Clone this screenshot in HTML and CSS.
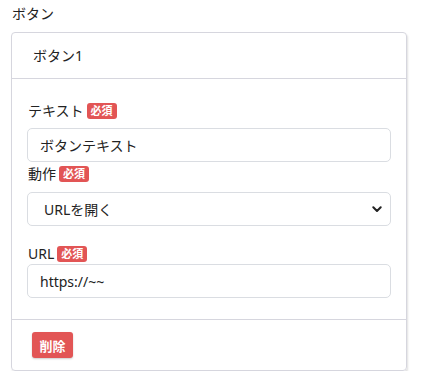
FILE: index.html
```html
<!DOCTYPE html>
<html lang="ja">
  <head>
    <meta charset="UTF-8" />
    <meta name="viewport" content="width=device-width, initial-scale=1.0" />
    <title>ボタン</title>
    <link rel="stylesheet" href="styles.css">
  </head>
  <body>
    <div class="page">
      <h3 class="section-title">ボタン</h3>
      <div class="card">
        <div class="card-header">ボタン1</div>
        <div class="card-body">
          <label class="field-label first">テキスト <span class="badge">必須</span></label>
          <input class="field" type="text" value="ボタンテキスト" />

          <label class="field-label">動作 <span class="badge">必須</span></label>
          <div class="select-wrap">
            <select class="field select">
              <option>URLを開く</option>
            </select>
            <svg class="chevron" width="10" height="7" viewBox="0 0 10 7">
              <path d="M1.3 1.3 L5 5 L8.7 1.3" fill="none" stroke="#222" stroke-width="2" stroke-linecap="round" stroke-linejoin="round" />
            </svg>
          </div>

          <label class="field-label url">URL <span class="badge">必須</span></label>
          <input class="field" type="text" value="https://~~" />
        </div>
        <div class="card-footer">
          <button class="btn-delete" type="button">削除</button>
        </div>
      </div>
    </div>
  </body>
</html>
```

FILE: styles.css
```css
body {
  margin: 0;
  font-family: "Noto Sans", "Noto Sans CJK JP", sans-serif;
  color: #222;
  background: #fff;
}

.page {
  padding: 4px 19px 0 11px;
}

.section-title {
  margin: 0 0 8px 1px;
  font-size: 14px;
  font-weight: normal;
  line-height: 20px;
}

.card {
  border: 1px solid #d6d6de;
  border-radius: 4px;
  box-shadow: 1px 2px 2px rgba(0, 0, 0, 0.12);
}

.card-header {
  height: 45px;
  line-height: 45px;
  padding-left: 21px;
  font-size: 14px;
  border-bottom: 1px solid #d6d6de;
}

.card-body {
  padding: 24px 15px 21px 15px;
  display: flex;
  flex-direction: column;
}

.field-label {
  display: flex;
  align-items: center;
  gap: 3px;
  font-size: 14px;
  line-height: 16px;
  margin: 0 0 9px 1px;
}

.field-label.url {
  margin: 20px 0 2px 1px;
}

.field-label + .select-wrap {
  margin-top: 1px;
}

.badge {
  display: inline-block;
  background: #e25555;
  color: #fff;
  font-size: 11px;
  font-weight: bold;
  line-height: 16px;
  padding: 0 4px;
  border-radius: 3px;
}

.field {
  box-sizing: border-box;
  width: 100%;
  height: 34px;
  padding: 0 12px;
  border: 1px solid #dadde2;
  border-radius: 5px;
  font-family: inherit;
  font-size: 14px;
  color: #222;
  background: #fff;
  outline: none;
}

.field + .field-label {
  margin-top: 4px;
}

.select-wrap {
  position: relative;
}

.select {
  height: 34px;
  padding-left: 16px;
  appearance: none;
  -webkit-appearance: none;
}

.chevron {
  position: absolute;
  right: 9px;
  top: 14px;
  pointer-events: none;
}

.card-footer {
  border-top: 1px solid #d6d6de;
  padding: 12px 20px 12px 20px;
}

.btn-delete {
  display: block;
  width: 41px;
  height: 26px;
  padding: 0;
  border: none;
  border-radius: 3px;
  background: #e25555;
  color: #fff;
  font-family: inherit;
  font-size: 13px;
  font-weight: bold;
  box-shadow: 0 1px 2px rgba(0, 0, 0, 0.2);
  cursor: pointer;
}
```
